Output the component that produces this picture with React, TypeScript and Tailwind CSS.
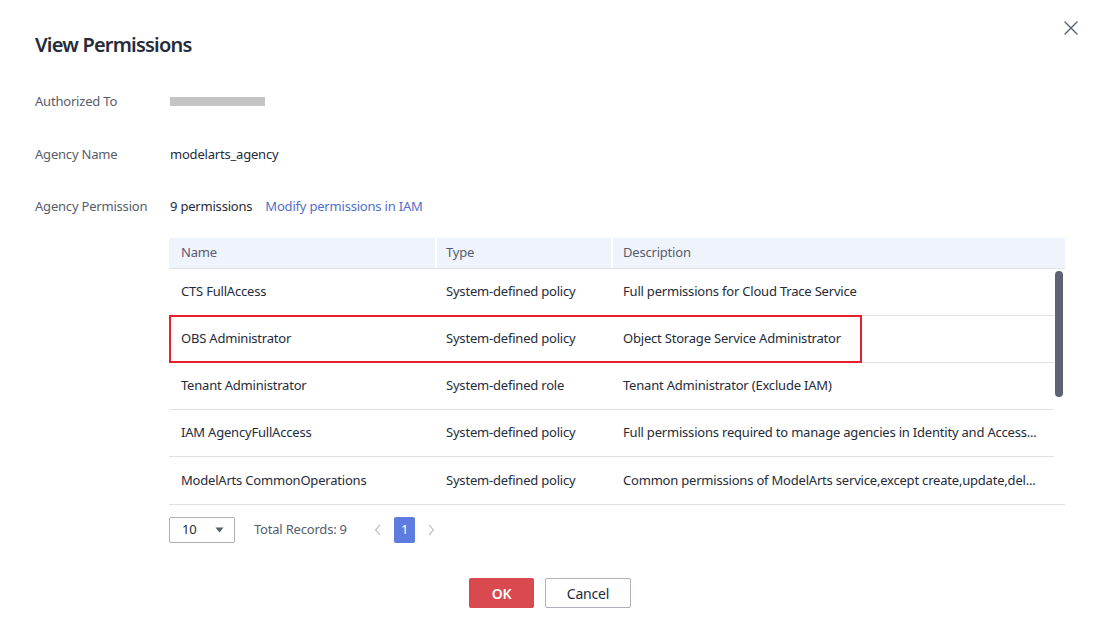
import React from "react";

const rows = [
  ["CTS FullAccess", "System-defined policy", "Full permissions for Cloud Trace Service"],
  ["OBS Administrator", "System-defined policy", "Object Storage Service Administrator"],
  ["Tenant Administrator", "System-defined role", "Tenant Administrator (Exclude IAM)"],
  ["IAM AgencyFullAccess", "System-defined policy", "Full permissions required to manage agencies in Identity and Access..."],
  ["ModelArts CommonOperations", "System-defined policy", "Common permissions of ModelArts service,except create,update,del..."],
];

export default function App() {
  return (
    <div
      className="relative w-[1100px] h-[644px] bg-white overflow-hidden px-[35px] text-[13px] tracking-[-0.2px] text-[#252b3a]"
      style={{ fontFamily: '"Noto Sans", "Liberation Sans", sans-serif' }}
    >
      <button className="absolute right-[17px] top-[16px] w-[24px] h-[24px] flex items-center justify-center text-[#575d6c]">
        <svg width="24" height="24" viewBox="0 0 24 24" fill="none" stroke="currentColor" strokeWidth="1.4" strokeLinecap="round">
          <path d="M6 6l12 12M18 6L6 18" />
        </svg>
      </button>

      <div className="pt-[31px] text-[20px] leading-[28px] font-semibold tracking-[-0.8px] text-[#252b3a]">View Permissions</div>

      <div className="mt-[33px] flex items-center h-[20px]">
        <div className="w-[135px] text-[#575d6c]">Authorized To</div>
        <div className="w-[95px] h-[9px] bg-[#c4c4c4] -mt-[1px]" />
      </div>

      <div className="mt-[33px] flex items-center h-[20px]">
        <div className="w-[135px] text-[#575d6c]">Agency Name</div>
        <div>modelarts_agency</div>
      </div>

      <div className="mt-[32px] flex items-center h-[20px]">
        <div className="w-[135px] text-[#575d6c]">Agency Permission</div>
        <div>9 permissions</div>
        <div className="ml-[13px] text-[#526ecc]">Modify permissions in IAM</div>
      </div>

      <div className="mt-[21px] ml-[134px] w-[896px]">
        <div className="flex h-[31px] bg-[#eff3fc] border-b border-[#dfe1e6] text-[#575d6c] items-center">
          <div className="w-[266px] pl-[12px]">Name</div>
          <div className="w-[176px] pl-[9px] border-l-2 border-white h-full flex items-center">Type</div>
          <div className="flex-1 pl-[10px] border-l-2 border-white h-full flex items-center">Description</div>
        </div>
        <div className="flex border-b border-[#dfe1e6]">
          <div className="w-[885px]">
            {rows.map((r, i) => (
              <div
                key={i}
                className={`relative flex items-center h-[47px] ${i < rows.length - 1 ? "border-b border-[#dfe1e6]" : ""}`}
              >
                <div className="w-[266px] pl-[12px] whitespace-nowrap">{r[0]}</div>
                <div className="w-[176px] pl-[11px] whitespace-nowrap">{r[1]}</div>
                <div className="flex-1 pl-[12px] whitespace-nowrap">{r[2]}</div>
                {i === 1 && (
                  <div className="absolute left-0 top-[-1px] w-[693px] h-[48px] border-2 border-[#e8202c] pointer-events-none" />
                )}
              </div>
            ))}
          </div>
          <div className="flex-1 pt-[2px] pl-[1px]">
            <div className="w-[8px] h-[126px] rounded-[4px] bg-[#5e6373]" />
          </div>
        </div>

        <div className="mt-[12px] flex items-center h-[26px]">
          <div className="w-[66px] h-[26px] border border-[#adb0b8] rounded-[2px] flex items-center pl-[12px] pr-[10px] justify-between">
            <span>10</span>
            <svg width="9" height="6" viewBox="0 0 9 6">
              <path d="M0.5 0.5h8L4.5 5.5z" fill="#575d6c" />
            </svg>
          </div>
          <div className="ml-[19px] w-[96px] text-[#575d6c] whitespace-nowrap">Total Records: 9</div>
          <div className="ml-[20px] text-[#c2c5cc] w-[16px] flex justify-center">
            <svg width="8" height="12" viewBox="0 0 8 12" fill="none" stroke="currentColor" strokeWidth="1.3">
              <path d="M6 1L1.5 6 6 11" />
            </svg>
          </div>
          <div className="ml-[8px] w-[21px] h-[26px] rounded-[2px] bg-[#5e7ce0] text-white flex items-center justify-center">1</div>
          <div className="ml-[12px] text-[#c2c5cc] w-[8px] flex justify-center">
            <svg width="8" height="12" viewBox="0 0 8 12" fill="none" stroke="currentColor" strokeWidth="1.3">
              <path d="M2 1l4.5 5L2 11" />
            </svg>
          </div>
        </div>
      </div>

      <div className="mt-[35px] flex justify-center gap-[11px] -ml-[35px] -mr-[35px]">
        <button className="w-[65px] h-[30px] rounded-[2px] bg-[#d9494f] text-white font-semibold text-[14px]">OK</button>
        <button className="w-[86px] h-[30px] rounded-[2px] border border-[#adb0b8] bg-white text-[#252b3a] text-[14px]">Cancel</button>
      </div>
    </div>
  );
}
